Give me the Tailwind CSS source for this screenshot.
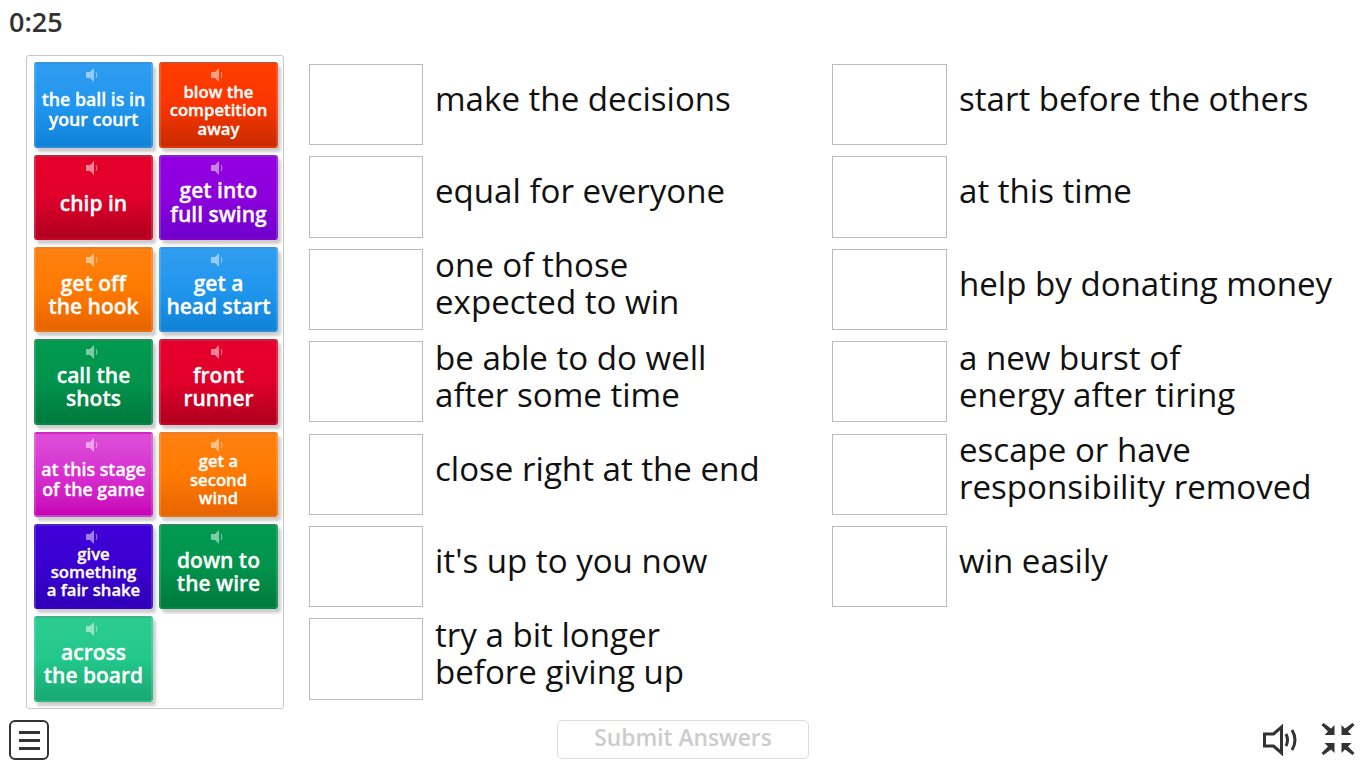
<!DOCTYPE html>
<html lang="en">
<head>
  <meta charset="UTF-8" />
  <title>Match up</title>
  <script src="https://cdn.jsdelivr.net/npm/@tailwindcss/browser@4"></script>
</head>
<body class="bg-white w-[1366px] h-[768px] overflow-hidden font-['Open_Sans',sans-serif] text-[#111]">

  <!-- Timer -->
  <div class="h-[55px] pl-[9px] pt-[4px] text-[27px] leading-[36px] font-semibold text-[#333]">0:25</div>

  <div class="flex h-[654px]">
    <!-- Tile tray -->
    <div class="ml-[26px] w-[258px] h-[654px] border border-[#c8c8c8] rounded-[3px] pl-[7px] pt-[6.33px] grid grid-cols-[119px_119px] gap-x-[6px] auto-rows-[85.33px] gap-y-[7px] content-start text-white text-center font-semibold [-webkit-text-stroke:0.3px_white]">
      <div class="flex flex-col items-center rounded-[3px] bg-linear-to-b from-[#2f9cf0] via-[#2196ee] to-[#0f83d8] border-2 border-white/15 border-b-black/10 shadow-[3px_4px_3px_rgba(0,0,0,0.2)]">
        <svg class="w-[13px] h-[14px] mt-[4px] mr-[3px] shrink-0 opacity-50" viewBox="0 0 13 14" fill="none"><path d="M0 4h4l4-4v14l-4-4H0z" fill="#fff"/><path d="M10 4q2 3 0 6" stroke="#fff"/></svg>
        <div class="flex-1 flex items-center text-[17.800px] leading-[19.500px] pb-[8px]">the ball is in<br>your court</div>
      </div>
      <div class="flex flex-col items-center rounded-[3px] bg-linear-to-b from-[#ff3c00] via-[#fa3600] to-[#c92b00] border-2 border-white/15 border-b-black/10 shadow-[3px_4px_3px_rgba(0,0,0,0.2)]">
        <svg class="w-[13px] h-[14px] mt-[4px] mr-[3px] shrink-0 opacity-50" viewBox="0 0 13 14" fill="none"><path d="M0 4h4l4-4v14l-4-4H0z" fill="#fff"/><path d="M10 4q2 3 0 6" stroke="#fff"/></svg>
        <div class="flex-1 flex items-center text-[16.700px] leading-[18.300px] pb-[7px]">blow the<br>competition<br>away</div>
      </div>
      <div class="flex flex-col items-center rounded-[3px] bg-linear-to-b from-[#e6002c] via-[#e00029] to-[#b00020] border-2 border-white/15 border-b-black/10 shadow-[3px_4px_3px_rgba(0,0,0,0.2)]">
        <svg class="w-[13px] h-[14px] mt-[4px] mr-[3px] shrink-0 opacity-50" viewBox="0 0 13 14" fill="none"><path d="M0 4h4l4-4v14l-4-4H0z" fill="#fff"/><path d="M10 4q2 3 0 6" stroke="#fff"/></svg>
        <div class="flex-1 flex items-center text-[21px] leading-[24px] pb-[6px]">chip in</div>
      </div>
      <div class="flex flex-col items-center rounded-[3px] bg-linear-to-b from-[#9300e0] via-[#8c00dc] to-[#6f00cc] border-2 border-white/15 border-b-black/10 shadow-[3px_4px_3px_rgba(0,0,0,0.2)]">
        <svg class="w-[13px] h-[14px] mt-[4px] mr-[3px] shrink-0 opacity-50" viewBox="0 0 13 14" fill="none"><path d="M0 4h4l4-4v14l-4-4H0z" fill="#fff"/><path d="M10 4q2 3 0 6" stroke="#fff"/></svg>
        <div class="flex-1 flex items-center text-[21px] leading-[23.500px] pb-[7px]">get into<br>full swing</div>
      </div>
      <div class="flex flex-col items-center rounded-[3px] bg-linear-to-b from-[#ff8010] via-[#ff7a00] to-[#e86400] border-2 border-white/15 border-b-black/10 shadow-[3px_4px_3px_rgba(0,0,0,0.2)]">
        <svg class="w-[13px] h-[14px] mt-[4px] mr-[3px] shrink-0 opacity-50" viewBox="0 0 13 14" fill="none"><path d="M0 4h4l4-4v14l-4-4H0z" fill="#fff"/><path d="M10 4q2 3 0 6" stroke="#fff"/></svg>
        <div class="flex-1 flex items-center text-[21px] leading-[23.500px] pb-[7px]">get off<br>the hook</div>
      </div>
      <div class="flex flex-col items-center rounded-[3px] bg-linear-to-b from-[#2f9cf0] via-[#2196ee] to-[#0f83d8] border-2 border-white/15 border-b-black/10 shadow-[3px_4px_3px_rgba(0,0,0,0.2)]">
        <svg class="w-[13px] h-[14px] mt-[4px] mr-[3px] shrink-0 opacity-50" viewBox="0 0 13 14" fill="none"><path d="M0 4h4l4-4v14l-4-4H0z" fill="#fff"/><path d="M10 4q2 3 0 6" stroke="#fff"/></svg>
        <div class="flex-1 flex items-center text-[21px] leading-[23.500px] pb-[7px]">get a<br>head start</div>
      </div>
      <div class="flex flex-col items-center rounded-[3px] bg-linear-to-b from-[#009a50] via-[#00934c] to-[#007a3e] border-2 border-white/15 border-b-black/10 shadow-[3px_4px_3px_rgba(0,0,0,0.2)]">
        <svg class="w-[13px] h-[14px] mt-[4px] mr-[3px] shrink-0 opacity-50" viewBox="0 0 13 14" fill="none"><path d="M0 4h4l4-4v14l-4-4H0z" fill="#fff"/><path d="M10 4q2 3 0 6" stroke="#fff"/></svg>
        <div class="flex-1 flex items-center text-[21px] leading-[23.500px] pb-[7px]">call the<br>shots</div>
      </div>
      <div class="flex flex-col items-center rounded-[3px] bg-linear-to-b from-[#e6002c] via-[#e00029] to-[#b00020] border-2 border-white/15 border-b-black/10 shadow-[3px_4px_3px_rgba(0,0,0,0.2)]">
        <svg class="w-[13px] h-[14px] mt-[4px] mr-[3px] shrink-0 opacity-50" viewBox="0 0 13 14" fill="none"><path d="M0 4h4l4-4v14l-4-4H0z" fill="#fff"/><path d="M10 4q2 3 0 6" stroke="#fff"/></svg>
        <div class="flex-1 flex items-center text-[21px] leading-[23.500px] pb-[7px]">front<br>runner</div>
      </div>
      <div class="flex flex-col items-center rounded-[3px] bg-linear-to-b from-[#dd4fd8] via-[#d62fd0] to-[#c800b8] border-2 border-white/15 border-b-black/10 shadow-[3px_4px_3px_rgba(0,0,0,0.2)]">
        <svg class="w-[13px] h-[14px] mt-[4px] mr-[3px] shrink-0 opacity-50" viewBox="0 0 13 14" fill="none"><path d="M0 4h4l4-4v14l-4-4H0z" fill="#fff"/><path d="M10 4q2 3 0 6" stroke="#fff"/></svg>
        <div class="flex-1 flex items-center text-[17.800px] leading-[19.500px] pb-[7px]">at this stage<br>of the game</div>
      </div>
      <div class="flex flex-col items-center rounded-[3px] bg-linear-to-b from-[#ff8010] via-[#ff7a00] to-[#e86400] border-2 border-white/15 border-b-black/10 shadow-[3px_4px_3px_rgba(0,0,0,0.2)]">
        <svg class="w-[13px] h-[14px] mt-[4px] mr-[3px] shrink-0 opacity-50" viewBox="0 0 13 14" fill="none"><path d="M0 4h4l4-4v14l-4-4H0z" fill="#fff"/><path d="M10 4q2 3 0 6" stroke="#fff"/></svg>
        <div class="flex-1 flex items-center text-[16.700px] leading-[18.300px] pb-[7px]">get a<br>second<br>wind</div>
      </div>
      <div class="flex flex-col items-center rounded-[3px] bg-linear-to-b from-[#3f00d8] via-[#3a00d0] to-[#2f00b8] border-2 border-white/15 border-b-black/10 shadow-[3px_4px_3px_rgba(0,0,0,0.2)]">
        <svg class="w-[13px] h-[14px] mt-[4px] mr-[3px] shrink-0 opacity-50" viewBox="0 0 13 14" fill="none"><path d="M0 4h4l4-4v14l-4-4H0z" fill="#fff"/><path d="M10 4q2 3 0 6" stroke="#fff"/></svg>
        <div class="flex-1 flex items-center text-[16.700px] leading-[18.300px] pb-[7px]">give<br>something<br>a fair shake</div>
      </div>
      <div class="flex flex-col items-center rounded-[3px] bg-linear-to-b from-[#009a50] via-[#00934c] to-[#007a3e] border-2 border-white/15 border-b-black/10 shadow-[3px_4px_3px_rgba(0,0,0,0.2)]">
        <svg class="w-[13px] h-[14px] mt-[4px] mr-[3px] shrink-0 opacity-50" viewBox="0 0 13 14" fill="none"><path d="M0 4h4l4-4v14l-4-4H0z" fill="#fff"/><path d="M10 4q2 3 0 6" stroke="#fff"/></svg>
        <div class="flex-1 flex items-center text-[21px] leading-[23.500px] pb-[7px]">down to<br>the wire</div>
      </div>
      <div class="flex flex-col items-center rounded-[3px] bg-linear-to-b from-[#2dcb8f] via-[#22c88a] to-[#19a874] border-2 border-white/15 border-b-black/10 shadow-[3px_4px_3px_rgba(0,0,0,0.2)]">
        <svg class="w-[13px] h-[14px] mt-[4px] mr-[3px] shrink-0 opacity-50" viewBox="0 0 13 14" fill="none"><path d="M0 4h4l4-4v14l-4-4H0z" fill="#fff"/><path d="M10 4q2 3 0 6" stroke="#fff"/></svg>
        <div class="flex-1 flex items-center text-[21px] leading-[23.500px] pb-[7px]">across<br>the board</div>
      </div>
    </div>

    <!-- Left answers -->
    <div class="ml-[25px] w-[523px] pt-[9px] grid auto-rows-[81.300px] gap-y-[11.100px] content-start text-[33.100px] leading-[36.800px]">
      <div class="flex items-center gap-[12px]"><div class="w-[114px] h-full shrink-0 border border-[#bbb]"></div><div class="pb-[10.400px]">make the decisions</div></div>
      <div class="flex items-center gap-[12px]"><div class="w-[114px] h-full shrink-0 border border-[#bbb]"></div><div class="pb-[10.400px]">equal for everyone</div></div>
      <div class="flex items-center gap-[12px]"><div class="w-[114px] h-full shrink-0 border border-[#bbb]"></div><div class="pb-[10.400px]">one of those<br>expected to win</div></div>
      <div class="flex items-center gap-[12px]"><div class="w-[114px] h-full shrink-0 border border-[#bbb]"></div><div class="pb-[10.400px]">be able to do well<br>after some time</div></div>
      <div class="flex items-center gap-[12px]"><div class="w-[114px] h-full shrink-0 border border-[#bbb]"></div><div class="pb-[10.400px]">close right at the end</div></div>
      <div class="flex items-center gap-[12px]"><div class="w-[114px] h-full shrink-0 border border-[#bbb]"></div><div class="pb-[10.400px]">it's up to you now</div></div>
      <div class="flex items-center gap-[12px]"><div class="w-[114px] h-full shrink-0 border border-[#bbb]"></div><div class="pb-[10.400px]">try a bit longer<br>before giving up</div></div>
    </div>

    <!-- Right answers -->
    <div class="w-[520px] pt-[9px] grid auto-rows-[81.300px] gap-y-[11.100px] content-start text-[33.100px] leading-[36.800px]">
      <div class="flex items-center gap-[12px]"><div class="w-[115px] h-full shrink-0 border border-[#bbb]"></div><div class="pb-[10.400px]">start before the others</div></div>
      <div class="flex items-center gap-[12px]"><div class="w-[115px] h-full shrink-0 border border-[#bbb]"></div><div class="pb-[10.400px]">at this time</div></div>
      <div class="flex items-center gap-[12px]"><div class="w-[115px] h-full shrink-0 border border-[#bbb]"></div><div class="pb-[10.400px]">help by donating money</div></div>
      <div class="flex items-center gap-[12px]"><div class="w-[115px] h-full shrink-0 border border-[#bbb]"></div><div class="pb-[10.400px]">a new burst of<br>energy after tiring</div></div>
      <div class="flex items-center gap-[12px]"><div class="w-[115px] h-full shrink-0 border border-[#bbb]"></div><div class="pb-[10.400px]">escape or have<br>responsibility removed</div></div>
      <div class="flex items-center gap-[12px]"><div class="w-[115px] h-full shrink-0 border border-[#bbb]"></div><div class="pb-[10.400px]">win easily</div></div>
    </div>
  </div>

  <!-- Bottom bar -->
  <div class="flex items-start h-[59px] pt-[11px] pl-[9px]">
    <div class="w-[40px] h-[40px] border-2 border-[#333] rounded-[6px] flex flex-col items-center justify-center gap-[5px]">
      <div class="w-[21px] h-[3px] bg-[#333]"></div>
      <div class="w-[21px] h-[3px] bg-[#333]"></div>
      <div class="w-[21px] h-[3px] bg-[#333]"></div>
    </div>
    <button class="ml-[508px] w-[252px] h-[39px] border border-[#ddd] rounded-[5px] text-[22.800px] font-semibold text-[#ccc] pb-[3px]">Submit Answers</button>
    <svg class="ml-[454px] mt-[2px] w-[36px] h-[36px]" viewBox="0 0 36 36" fill="none" stroke="#333" stroke-width="3"><path d="M1.500 12h9l8-7v26l-8-7h-9z"/><path d="M23 12q3 6 0 12M29 8q6 10 0 20"/></svg>
    <svg class="ml-[21px] mt-[1px] w-[36px] h-[36px]" viewBox="0 0 36 36" fill="#333"><path d="M3.500 2l-2 2 6.500 6.500-3.500 3.500h10V4l-3.500 3.500zM32.500 2l2 2-6.500 6.500 3.500 3.500h-10V4l3.500 3.500zM3.500 34l-2-2 6.500-6.500-3.500-3.500h10v10l-3.500-3.500zM32.500 34l2-2-6.500-6.500 3.500-3.500h-10v10l3.500-3.500z"/></svg>
  </div>
</body>
</html>
